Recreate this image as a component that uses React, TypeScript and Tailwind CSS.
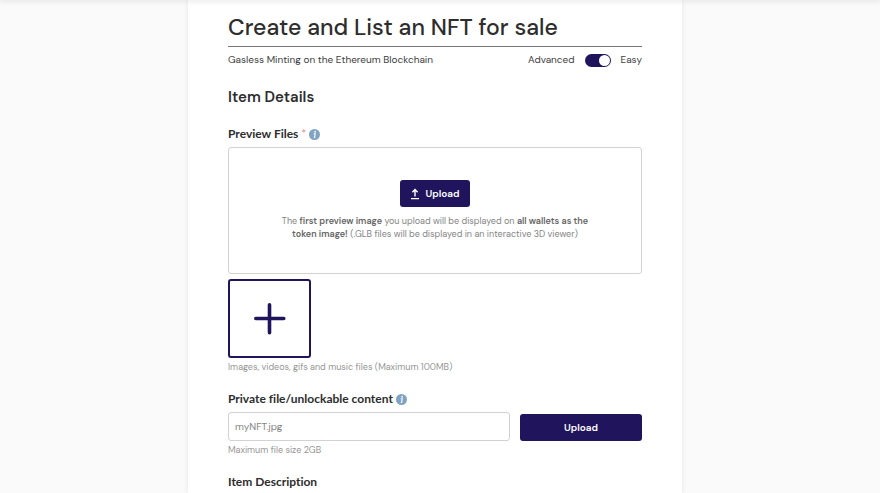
import { useState } from "react";
import type { ReactNode } from "react";

function InfoIcon() {
  return (
    <svg viewBox="0 0 12 12" className="size-[11px]" role="img" aria-label="More information">
      <circle cx="6" cy="6" r="6" fill="#7fa3c0" />
      <circle cx="6.7" cy="3" r="1" fill="#f4f8fb" />
      <path d="M5 5.2h1.8L5.9 9.2h1" fill="none" stroke="#f4f8fb" strokeWidth="1.3" />
    </svg>
  );
}

function UploadIcon() {
  return (
    <svg viewBox="0 0 10 12" className="h-3 w-2.5" fill="none" stroke="currentColor" strokeWidth="1.4" aria-hidden="true">
      <path d="M5 8.4V2M2.4 4.2 5 1.6l2.6 2.6M1 10.6h8" />
    </svg>
  );
}

function Hint({ children }: { children: ReactNode }) {
  return <p className="text-[9px] leading-[18px] text-[#969696]">{children}</p>;
}

export default function App() {
  const [easy, setEasy] = useState(true);

  return (
    <div className="flex min-h-screen flex-col bg-[#fafafa] font-['DM_Sans','Inter',sans-serif] text-[#2d2d2d] [font-variant-ligatures:no-common-ligatures]">
      <header className="relative h-0 shadow-[0_0_5px_1px_rgba(0,0,0,0.16)]" />
      <div className="flex flex-1 justify-center pr-2.5">
        <main className="w-full max-w-[494px] bg-white px-10 pt-3 shadow-[0_0_5px_rgba(0,0,0,0.09)]">
          <h1 className="border-b border-[#777777] pb-1 text-[23px] leading-[30px] font-medium whitespace-nowrap">
            Create and List an NFT for sale
          </h1>
          <div className="flex items-center justify-between pt-1 text-[10px] leading-[18px] text-[#404040]">
            <p>Gasless Minting on the Ethereum Blockchain</p>
            <label className="flex items-center gap-2.5">
              <span>Advanced</span>
              <input
                type="checkbox"
                role="switch"
                checked={easy}
                onChange={(e) => setEasy(e.target.checked)}
                className="peer sr-only"
              />
              <span className="flex h-[13px] w-[26px] items-center rounded-full bg-[#20155c] px-px peer-checked:justify-end">
                <span className="size-[11px] rounded-full bg-white" />
              </span>
              <span>Easy</span>
            </label>
          </div>

          <h2 className="mt-4 text-[15px] leading-6 font-semibold">Item Details</h2>

          <div className="mt-4 flex h-[18px] items-center gap-[3px]">
            <h3 className="font-['Lato',sans-serif] text-[12px] leading-[18px] font-bold">
              Preview Files <span className="font-normal text-[#e58c8c]">*</span>
            </h3>
            <InfoIcon />
          </div>
          <section className="mt-1 flex flex-col items-center rounded-[3px] border border-[#d2d2d2] px-12 py-8">
            <button
              type="button"
              className="flex h-[27px] items-center gap-[5px] rounded-[3px] bg-[#20155c] px-2.5 text-[10px] font-semibold text-white"
            >
              <UploadIcon />
              Upload
            </button>
            <p className="mt-2 text-center text-[9px] leading-[13px] text-[#858585]">
              The <b className="font-semibold text-[#666666]">first preview image</b> you upload will be displayed on{" "}
              <b className="font-semibold text-[#666666]">all wallets as the token image!</b> (.GLB files will be
              displayed in an interactive 3D viewer)
            </p>
          </section>

          <button
            type="button"
            aria-label="Add preview file"
            className="mt-[5px] flex h-[79px] w-[83px] items-center justify-center rounded-[3px] border-2 border-[#20155c] text-[#20155c]"
          >
            <svg viewBox="0 0 32 32" className="size-8" stroke="currentColor" strokeWidth="3.6" strokeLinecap="round" aria-hidden="true">
              <path d="M15.5 1.8v28M1.8 15.5h28" />
            </svg>
          </button>
          <Hint>Images, videos, gifs and music files (Maximum 100MB)</Hint>

          <div className="mt-[14px] flex h-[18px] items-center gap-[3px]">
            <label htmlFor="private-file" className="font-['Lato',sans-serif] text-[12px] leading-[18px] font-bold">
              Private file/unlockable content
            </label>
            <InfoIcon />
          </div>
          <div className="mt-1 flex items-end gap-2.5">
            <input
              id="private-file"
              type="text"
              placeholder="myNFT.jpg"
              className="h-[29px] min-w-0 flex-1 rounded-[3px] border border-[#d2d2d2] px-1.5 text-[10px] placeholder:text-[#858585]"
            />
            <button type="button" className="h-[27px] w-[122px] rounded-[3px] bg-[#20155c] text-[10px] font-semibold text-white">
              Upload
            </button>
          </div>
          <Hint>Maximum file size 2GB</Hint>

          <h3 className="mt-[14px] font-['Lato',sans-serif] text-[12px] leading-[18px] font-bold">Item Description</h3>
        </main>
      </div>
    </div>
  );
}
